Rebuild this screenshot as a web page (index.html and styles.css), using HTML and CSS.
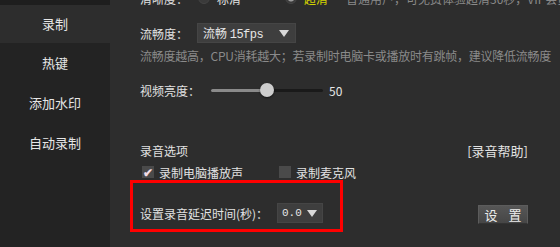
FILE: index.html
```html
<!DOCTYPE html>
<html lang="zh-CN">

<head>
    <meta charset="UTF-8">
    <title>录制设置</title>
    <link rel="stylesheet" href="styles.css">
</head>

<body>
    <div class="page">
        <div class="sidebar">
            <div class="nav-item active">录制</div>
            <div class="nav-item">热键</div>
            <div class="nav-item">添加水印</div>
            <div class="nav-item">自动录制</div>
        </div>

        <div class="main">
            <div class="row top-row">
                <span class="label">清晰度：</span>
                <span class="radio"></span><span class="radio-text">标清</span>
                <span class="radio checked"></span><span class="radio-text hd">超清</span>
                <span class="note">普通用户，可免费体验超清30秒，VIP会员不限时长</span>
            </div>

            <div class="row fluency-row">
                <span class="label">流畅度：</span>
                <div class="select wide">
                    <span>流畅 <span class="mono">15fps</span></span>
                    <span class="arrow"></span>
                </div>
            </div>

            <div class="hint">流畅度越高，CPU消耗越大；若录制时电脑卡或播放时有跳帧，建议降低流畅度</div>

            <div class="row bright-row">
                <span class="label">视频亮度：</span>
                <div class="slider">
                    <div class="fill" style="width: 50%"></div>
                    <div class="thumb" style="left: 50%"></div>
                </div>
                <span class="value">50</span>
            </div>

            <div class="row audio-head">
                <span>录音选项</span>
                <span class="help">[录音帮助]</span>
            </div>

            <div class="row check-row">
                <label class="check-item">
                    <span class="box checked">✔</span>录制电脑播放声
                </label>
                <label class="check-item">
                    <span class="box"></span>录制麦克风
                </label>
            </div>

            <div class="row delay-row">
                <span class="delay-label">设置录音延迟时间(秒)：</span>
                <div class="select small">
                    <span class="mono">0.0</span>
                    <span class="arrow"></span>
                </div>
                <button class="set-btn">设 置</button>
            </div>

            <div class="mark"></div>
        </div>
    </div>
</body>

</html>
```

FILE: styles.css
```css
body {
    margin: 0;
    padding: 0;
    width: 560px;
    height: 247px;
    overflow: hidden;
    background: #2d2d2d;
    color: #e2e2e2;
    font-family: "Noto Sans CJK SC", "Liberation Sans", sans-serif;
    font-size: 12px;
}

.page {
    display: flex;
    height: 247px;
}

.sidebar {
    width: 110px;
    flex-shrink: 0;
    background: #232323;
    padding-top: 5px;
    box-shadow: inset 0 5px 0 #1e1e1e;
}

.nav-item {
    height: 40px;
    line-height: 40px;
    text-align: center;
    font-size: 13px;
    color: #e6e6e6;
}

.nav-item.active {
    height: 38px;
    line-height: 38px;
    background: #2d2d2d;
}

.main {
    position: relative;
    flex: 1;
    min-width: 0;
    padding: 0 32px 0 30px;
}

.row {
    display: flex;
    align-items: center;
    height: 20px;
}

.row > * {
    flex-shrink: 0;
}

.top-row {
    margin-top: -12px;
    margin-right: -32px;
    overflow: hidden;
}

.top-row .label {
    width: 58px;
}

.radio {
    width: 12px;
    height: 12px;
    border-radius: 50%;
    background: #3a3a3a;
    border: 1px solid #444;
    box-sizing: border-box;
    margin-right: 7px;
}

.radio.checked {
    background: radial-gradient(circle, #9a9a9a 0 3px, #3a3a3a 4px);
}

.radio-text {
    margin-right: 44px;
}

.radio-text.hd {
    color: #d4d400;
    margin-right: 18px;
}

.note {
    color: #8a8a8a;
    white-space: nowrap;
}

.fluency-row {
    margin-top: 15px;
}

.label {
    width: 57px;
}

.select {
    display: flex;
    align-items: center;
    justify-content: space-between;
    box-sizing: border-box;
    height: 20px;
    padding: 0 6px 0 5px;
    background: #3e3e3e;
    border: 1px solid #454545;
    color: #e6e6e6;
}

.select.wide {
    width: 99px;
}

.select.small {
    width: 46px;
    padding: 0 5px 0 4px;
}

.mono {
    font-family: "Liberation Mono", monospace;
    font-size: 12px;
    letter-spacing: -0.5px;
}

.select.small .mono {
    font-size: 11px;
    letter-spacing: 0;
}

.arrow {
    width: 0;
    height: 0;
    border-left: 5px solid transparent;
    border-right: 5px solid transparent;
    border-top: 7px solid #d8d8d8;
}

.hint {
    margin-top: 5px;
    margin-right: -32px;
    line-height: 16px;
    color: #8a8a8a;
    white-space: nowrap;
    letter-spacing: -0.25px;
}

.bright-row {
    margin-top: 16px;
}

.bright-row .label {
    width: 71px;
}

.slider {
    position: relative;
    width: 112px;
    height: 3px;
    background: #1a1a1a;
    border-radius: 2px;
}

.fill {
    height: 3px;
    background: #8a8a8a;
    border-radius: 2px;
}

.thumb {
    position: absolute;
    top: -6px;
    width: 14px;
    height: 14px;
    margin-left: -7px;
    border-radius: 50%;
    background: #cdcdcd;
    box-shadow: 0 1px 2px rgba(0, 0, 0, 0.6);
}

.value {
    margin-left: 6px;
    color: #e6e6e6;
}

.audio-head {
    margin-top: 40px;
    justify-content: space-between;
}

.help {
    font-size: 13px;
}

.check-row {
    margin-top: 2px;
}

.check-item {
    display: flex;
    align-items: center;
    width: 135px;
    margin-left: 2px;
}

.box {
    width: 12px;
    height: 12px;
    margin-right: 5px;
    background: #4a4a4a;
    color: #f3dce4;
    font-size: 12px;
    font-weight: bold;
    line-height: 12px;
    text-align: center;
}

.delay-row {
    margin-top: 20px;
    height: 22px;
}

.delay-label {
    width: 137px;
}

.set-btn {
    margin-left: auto;
    margin-top: 3px;
    width: 50px;
    height: 19px;
    padding: 0 0 0 4px;
    background: linear-gradient(#565656, #464646);
    border: 1px solid #5c5c5c;
    border-bottom-color: #333;
    color: #ececec;
    font-family: "Noto Sans CJK SC", sans-serif;
    font-size: 13px;
    line-height: 16px;
    letter-spacing: 4px;
}

.mark {
    position: absolute;
    left: 20px;
    top: 180px;
    width: 207px;
    height: 46px;
    border: 3px solid #f00;
}
```
